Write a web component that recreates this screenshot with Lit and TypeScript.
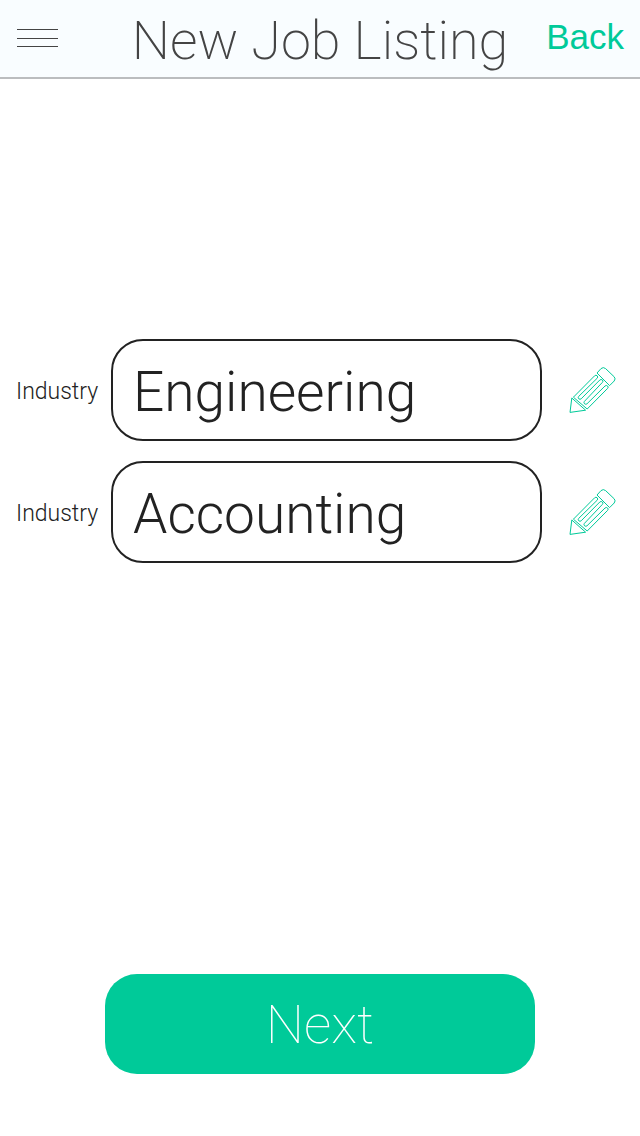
import { LitElement, html, css, svg } from "lit";
import { customElement, state } from "lit/decorators.js";

const pencil = svg`
  <path d="M11.8 40 10 54.4 25.6 52.2Z" />
  <path d="M13.4 39.2 34.6 17.8Q36 16.6 37.2 17.8T37 20.4L18.7 38.4Q17.6 39.8 18.8 40.8T21.2 40.8L39.8 22Q41.2 20.9 42.4 22T42.4 24.4L24.4 43.4Q23.4 44.8 24.6 45.8T27 45.8L45 28Q46.4 26.9 47.6 28T47.6 30.4L27.2 51Z" />
  <path d="M37 15 41 10.6Q43.3 8.6 45.6 10.6L54.2 18.8Q56 20.8 54.2 23L49.6 27.6Z" />
`;

@customElement("app-root")
export class AppRoot extends LitElement {
  static styles = css`
    :host {
      display: flex;
      flex-direction: column;
      min-height: 100vh;
      box-sizing: border-box;
      background: #fff;
      color: #222;
      font-family: Roboto, "Liberation Sans", sans-serif;
    }
    button, input { font: inherit; color: inherit; margin: 0; padding: 0; }
    button { border: 0; background: none; cursor: pointer; }
    .bar {
      display: grid;
      grid-template-columns: 88px 1fr 88px;
      align-items: center;
      height: 77px;
      padding: 0 16px;
      background: #f9fdff;
      border-bottom: 2px solid #bbbdbf;
      color: #444;
    }
    .menu { display: block; width: 42px; height: 24px; }
    .menu svg { display: block; }
    .title {
      margin: 0;
      padding-top: 4px;
      font-size: 54px;
      line-height: 72px;
      font-weight: 200;
      text-align: center;
      white-space: nowrap;
    }
    .back {
      justify-self: end;
      font-family: "Liberation Sans", sans-serif;
      font-size: 35px;
      line-height: 36px;
      padding-bottom: 4px;
      color: #00ca99;
      text-decoration: none;
    }
    .form {
      flex: 1;
      display: flex;
      flex-direction: column;
    }
    .fields {
      flex: 1;
      display: flex;
      flex-direction: column;
      gap: 20px;
      padding: 260px 16px 0;
    }
    .row {
      display: grid;
      grid-template-columns: 95px 1fr 82px;
      align-items: center;
    }
    .label {
      padding-top: 4px;
      font-size: 23px;
      line-height: 28px;
      font-weight: 300;
    }
    .input {
      width: 100%;
      min-width: 0;
      height: 102px;
      box-sizing: border-box;
      padding: 4px 20px 0;
      border: 2px solid #222;
      border-radius: 32px;
      background: #fff;
      font-size: 55px;
      font-weight: 300;
      outline: none;
    }
    .edit { justify-self: end; width: 64px; height: 64px; }
    .edit svg { display: block; fill: none; stroke: #00ca99; stroke-width: 1; }
    .next {
      height: 100px;
      margin: 0 105px 62px;
      border-radius: 32px;
      background: #00ca99;
      color: #fff;
      font-size: 54px;
      font-weight: 100;
    }
  `;

  @state() private industries = ["Engineering", "Accounting"];

  private focusField(i: number) {
    this.renderRoot.querySelector<HTMLInputElement>(`#industry-${i}`)?.focus();
  }

  render() {
    return html`
      <header class="bar">
        <button class="menu" aria-label="Menu">
          <svg width="42" height="24" viewBox="0 0 42 24" fill="#444">
            <path d="M1 2h41v1H1zM1 11h41v1H1zM1 19h41v1H1z" />
          </svg>
        </button>
        <h1 class="title">New Job Listing</h1>
        <a class="back" href="#back">Back</a>
      </header>
      <form class="form" @submit=${(e: Event) => e.preventDefault()}>
        <div class="fields">
          ${this.industries.map(
            (value, i) => html`
              <div class="row">
                <label class="label" for="industry-${i}">Industry</label>
                <input class="input" id="industry-${i}" type="text" .value=${value} />
                <button class="edit" type="button" aria-label="Edit" @click=${() => this.focusField(i)}>
                  <svg width="64" height="64" viewBox="0 0 64 64">${pencil}</svg>
                </button>
              </div>
            `
          )}
        </div>
        <button class="next" type="submit">Next</button>
      </form>
    `;
  }
}
